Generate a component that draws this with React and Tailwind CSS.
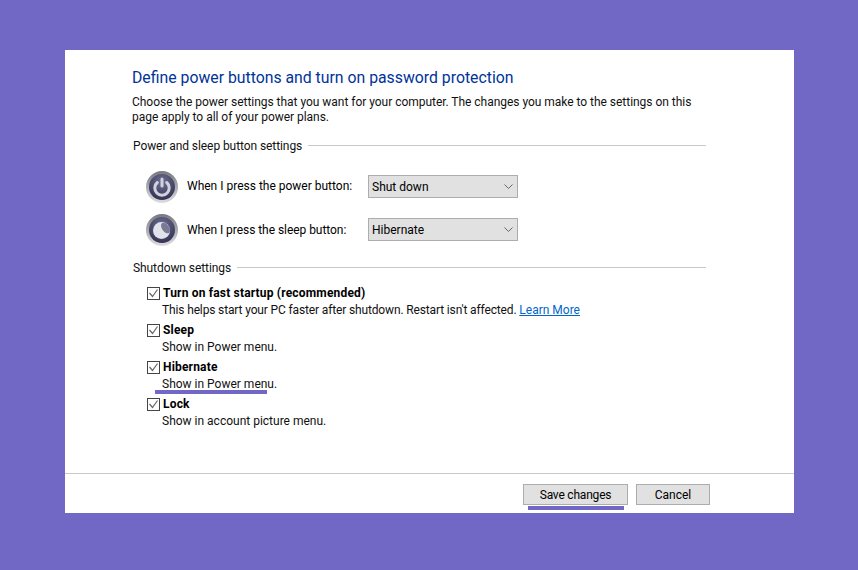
const PowerIcon = ({ sleep }) => (
  <svg width="34" height="34" viewBox="0 0 34 34" className="shrink-0">
    <defs>
      <linearGradient id={sleep ? 'ringS' : 'ringP'} x1="0" y1="0" x2="0" y2="1">
        <stop offset="0" stopColor="#77777f" />
        <stop offset="1" stopColor="#dedee0" />
      </linearGradient>
      <radialGradient id={sleep ? 'discS' : 'discP'} cx="0.5" cy="0.3" r="0.75">
        <stop offset="0" stopColor="#6f6f92" />
        <stop offset="1" stopColor="#2e2e4e" />
      </radialGradient>
    </defs>
    <circle cx="17" cy="17" r="16" fill={`url(#${sleep ? 'ringS' : 'ringP'})`} />
    <circle cx="17" cy="17" r="13" fill={`url(#${sleep ? 'discS' : 'discP'})`} />
    {sleep ? (
      <>
        <circle cx="16.500" cy="17.500" r="8.500" fill="#e2e2ea" />
        <ellipse cx="20.500" cy="15" rx="3.500" ry="6" transform="rotate(-35 20.500 15)" fill="#7a7a95" />
      </>
    ) : (
      <>
        <path d="M12.300 12.500a7.200 7.200 0 1 0 9.400 0" fill="none" stroke="#d2d2de" strokeWidth="3" strokeLinecap="round" />
        <path d="M17 9v7" stroke="#d2d2de" strokeWidth="3" strokeLinecap="round" />
      </>
    )}
  </svg>
)

const Dropdown = ({ value }) => (
  <div className="w-[150px] h-[23px] flex items-center justify-between pl-[3px] pr-[4px] bg-[#e1e1e1] border border-[#adadad] text-black">
    <span className="pt-px">{value}</span>
    <svg width="9" height="5" viewBox="0 0 9 5" fill="none" stroke="#666" strokeWidth="1"><path d="M.5.5l4 4 4-4" /></svg>
  </div>
)

const Section = ({ title }) => (
  <div className="flex items-center gap-[6px] ml-[1px] mr-[88px] h-4">
    <span className="text-[#111] pt-[2px] tracking-[-0.08px]">{title}</span>
    <div className="flex-1 h-px bg-[#c8c8c8]" />
  </div>
)

const CheckRow = ({ label, children }) => (
  <div className="relative ml-[15px]">
    <div className="flex items-center h-[17px] gap-[3px]">
      <div className="w-[13px] h-[13px] border border-[#444] flex items-center justify-center bg-white">
        <svg width="11" height="11" viewBox="0 0 11 11" fill="none" stroke="#666" strokeWidth="1.200"><path d="M1.500 5l3 3.500 5-7" /></svg>
      </div>
      <span className="font-bold text-black tracking-[0.18px]">{label}</span>
    </div>
    <div className="h-[17px] leading-[17px] pl-[15px] text-[#111]">{children}</div>
  </div>
)

export default function App() {
  return (
    <div className="w-[858px] h-[570px] bg-[#7068c4] pt-[50px] pl-[65px] overflow-hidden text-[12px] leading-[15px] font-['Roboto','Noto_Sans',sans-serif]">
      <div className="w-[729px] h-[463px] bg-white flex flex-col">
        <div className="flex-1 pl-[66px] pt-[18px]">
          <h1 className="text-[15.8px] ml-px leading-5 text-[#003399]">Define power buttons and turn on password protection</h1>
          <p className="mt-[7px] ml-px w-[565px] text-[#111] tracking-[-0.03px]">Choose the power settings that you want for your computer. The changes you make to the settings on this page apply to all of your power plans.</p>

          <div className="mt-[12px] ml-px"><Section title="Power and sleep button settings" /></div>
          <div className="mt-[22px] flex items-center h-[23px] ml-[14px]">
            <PowerIcon />
            <span className="w-[181px] ml-[8px] text-black">When I press the power button:</span>
            <Dropdown value="Shut down" />
          </div>
          <div className="mt-[20px] flex items-center h-[23px] ml-[14px]">
            <PowerIcon sleep />
            <span className="w-[181px] ml-[8px] pt-px text-black tracking-[-0.05px]">When I press the sleep button:</span>
            <Dropdown value="Hibernate" />
          </div>

          <div className="mt-[18px] ml-px"><Section title="Shutdown settings" /></div>
          <div className="mt-[10px] ml-px flex flex-col gap-[3px]">
            <CheckRow label="Turn on fast startup (recommended)">
              <span className="tracking-[-0.14px]">This helps start your PC faster after shutdown. Restart isn't affected. </span><a className="text-[#0066cc] underline">Learn More</a>
            </CheckRow>
            <CheckRow label="Sleep">Show in Power menu.</CheckRow>
            <CheckRow label="Hibernate">
              Show in Power menu.
              <div className="absolute left-[8px] top-[31px] w-[112px] h-1 bg-[#7068c4]" />
            </CheckRow>
            <CheckRow label="Lock">Show in account picture menu.</CheckRow>
          </div>
        </div>
        <div className="h-[40px] border-t border-[#c8c8c8] flex justify-end gap-2 pt-[10px] pr-[84px] text-black">
          <div className="relative">
            <button className="w-[105px] h-[21px] pt-px bg-[#e1e1e1] border border-[#adadad] tracking-[-0.2px]">Save changes</button>
            <div className="absolute left-[5px] top-[22px] w-[96px] h-1 bg-[#7068c4]" />
          </div>
          <button className="w-[74px] h-[21px] pt-px bg-[#e1e1e1] border border-[#adadad]">Cancel</button>
        </div>
      </div>
    </div>
  )
}
